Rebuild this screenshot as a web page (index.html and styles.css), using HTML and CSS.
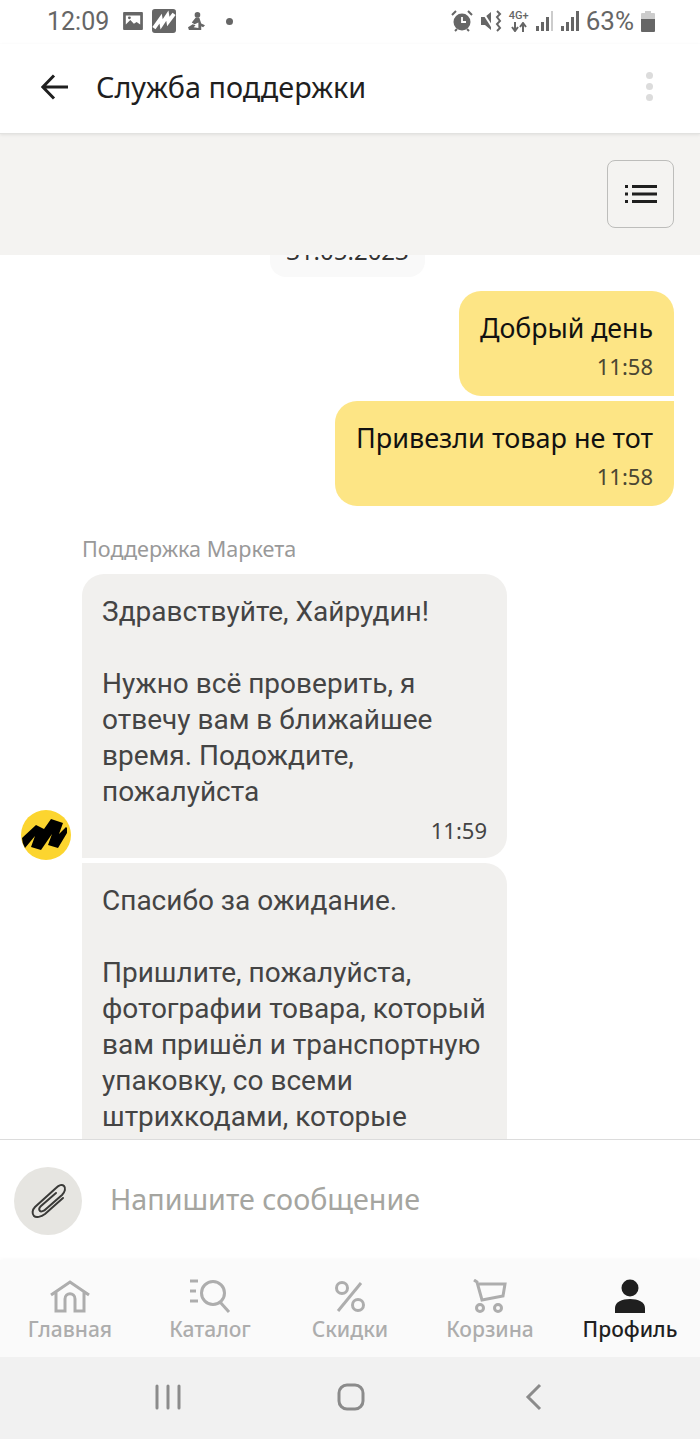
FILE: index.html
```html
<!DOCTYPE html>
<html lang="ru">
<head>
    <meta charset="UTF-8">
    <meta name="viewport" content="width=device-width, initial-scale=1.0">
    <title>Служба поддержки</title>
    <link rel="stylesheet" href="styles.css">
</head>
<body>

<div class="page">
    <!-- статус-бар -->
    <div class="status-bar">
        <div class="status-left">
            <span class="status-time">12:09</span>
            <svg class="st-icon" width="20" height="18" viewBox="0 0 22 20"><path fill="#666" fill-rule="evenodd" d="M1 0h20a1 1 0 0 1 1 1v18a1 1 0 0 1-1 1H1a1 1 0 0 1-1-1V1a1 1 0 0 1 1-1zM3 4v10l5-5 4 4 3-2 4 3V4z"/><circle cx="7" cy="6.5" r="1.6" fill="#666"/></svg>
            <svg class="st-icon st-market" width="24" height="24" viewBox="0 0 25 25"><rect width="25" height="25" rx="3" fill="#666"/><path fill="none" stroke="#fff" stroke-width="4" d="M2 20 9 10l1 6 6-9 1 6 6-8"/></svg>
            <svg class="st-icon st-figure" width="17" height="19" viewBox="0 0 18 20"><circle cx="10" cy="3" r="3" fill="#666"/><path fill="#666" d="M8 6h4l2 6 4 2-2 2-2-1v4H1l-1-3 5-3 3 1-2 2 5 1V11L7 13 4 11z"/></svg>
            <span class="status-dot"></span>
        </div>
        <div class="status-right">
            <svg width="22" height="22" viewBox="0 0 22 22"><circle cx="11" cy="12" r="8.5" fill="#666"/><path d="M11 7v5h4" fill="none" stroke="#fff" stroke-width="1.8"/><path d="M1 5l4-4M21 5l-4-4" stroke="#666" stroke-width="2"/><path d="M4 21l2-2M18 21l-2-2" stroke="#666" stroke-width="2"/></svg>
            <svg class="st-mute" width="21" height="22" viewBox="0 0 21 22"><path fill="#666" d="M0 7h4l6-5v18l-6-5H0z"/><path d="M1 1l12 19" stroke="#fff" stroke-width="2"/><path d="M16 1l3 3-3 3 3 4-3 3 3 4-3 3" fill="none" stroke="#666" stroke-width="2"/></svg>
            <div class="st-network">
                <span>4G+</span>
                <svg width="16" height="10" viewBox="0 0 16 10"><path d="M4 0v8M1 5l3 4 3-4M12 10V2M9 5l3-4 3 4" fill="none" stroke="#666" stroke-width="2"/></svg>
            </div>
            <svg width="18" height="20" viewBox="0 0 18 20"><rect x="0" y="15" width="3" height="5" fill="#666"/><rect x="5" y="11" width="3" height="9" fill="#666"/><rect x="10" y="6" width="3" height="14" fill="#666"/><rect x="15" y="0" width="2" height="20" fill="#ccc"/></svg>
            <svg width="18" height="20" viewBox="0 0 18 20"><rect x="0" y="15" width="3" height="5" fill="#666"/><rect x="5" y="11" width="3" height="9" fill="#666"/><rect x="10" y="6" width="3" height="14" fill="#666"/><rect x="15" y="0" width="3" height="20" fill="#666"/></svg>
            <span class="status-battery">63%</span>
            <svg width="14" height="21" viewBox="0 0 14 21"><path fill="#ccc" d="M4 0h6v2h3a1 1 0 0 1 1 1v5H0V3a1 1 0 0 1 1-1h3z"/><path fill="#666" d="M0 8h14v12a1 1 0 0 1-1 1H1a1 1 0 0 1-1-1z"/></svg>
        </div>
    </div>

    <!-- шапка -->
    <div class="header">
        <svg class="back-icon" width="28" height="26" viewBox="0 0 28 26"><path d="M27 13H2M13 1.500 1.800 13 13 24.500" fill="none" stroke="#1f1f1f" stroke-width="3"/></svg>
        <h1>Служба поддержки</h1>
        <div class="dots"><span></span><span></span><span></span></div>
    </div>

    <div class="toolbar">
        <button class="list-button">
            <svg width="32" height="22" viewBox="0 0 32 22"><path d="M0 2h3v3H0zM0 9.500h3v3H0zM0 17h3v3H0zM7 2h25v3H7zM7 9.500h25v3H7zM7 17h25v3H7z" fill="#1f1f1f"/></svg>
        </button>
    </div>

    <!-- чат -->
    <div class="chat">
        <div class="date-chip">31.05.2023</div>

        <div class="msg-out first">
            <div class="msg-text">Добрый день</div>
            <div class="msg-time">11:58</div>
        </div>
        <div class="msg-out second">
            <div class="msg-text">Привезли товар не тот</div>
            <div class="msg-time">11:58</div>
        </div>

        <div class="sender">Поддержка Маркета</div>
        <div class="msg-row">
            <svg class="avatar" width="50" height="50" viewBox="0 0 50 50">
                <circle cx="25" cy="25" r="25" fill="#fcd52f"/>
                <path fill="#000" d="M1 28 15 15l8 4 7-10 12 4-4 11 7-7 1 1v5L37 38l-10-3 4-11-11 16-10-3 4-11-10 12q-3-5-3-10z"/>
            </svg>
            <div class="msg-in first">
                <div class="msg-text">Здравствуйте, Хайрудин!<br><br>Нужно всё проверить, я<br>отвечу вам в ближайшее<br>время. Подождите,<br>пожалуйста</div>
                <div class="msg-time">11:59</div>
            </div>
        </div>
        <div class="msg-in second">
            <div class="msg-text">Спасибо за ожидание.<br><br>Пришлите, пожалуйста,<br>фотографии товара, который<br>вам пришёл и транспортную<br>упаковку, со всеми<br>штрихкодами, которые</div>
        </div>
    </div>

    <!-- поле ввода -->
    <div class="composer">
        <div class="attach">
            <svg width="38" height="38" viewBox="0 0 38 38"><path d="M34 16 16 32c-4 3-9 4-11 2s-2-6 1-9L27 6c3-3 6-4 8-2s1 6-2 9L17 27c-2 2-5 3-6 2s-1-3 1-5L27 11" fill="none" stroke="#3a3a38" stroke-width="2" stroke-linecap="round"/></svg>
        </div>
        <div class="placeholder">Напишите сообщение</div>
    </div>

    <!-- нижнее меню -->
    <div class="tabs">
        <div class="tab">
            <svg width="40" height="34" viewBox="0 0 40 34"><path d="M1 16 20 3l19 13M6 13v19h9V20c0-7 10-7 10 0v12h9V13" fill="none" stroke="#adadad" stroke-width="3"/></svg>
            <span>Главная</span>
        </div>
        <div class="tab">
            <svg width="42" height="34" viewBox="0 0 42 34"><path d="M1 2h8M1 12h6M1 22h8" stroke="#adadad" stroke-width="3"/><circle cx="24" cy="14" r="11.500" fill="none" stroke="#adadad" stroke-width="3"/><path d="m31 23 9 10" stroke="#adadad" stroke-width="3"/></svg>
            <span>Каталог</span>
        </div>
        <div class="tab">
            <svg width="34" height="34" viewBox="0 0 34 34"><circle cx="9" cy="9" r="5.500" fill="none" stroke="#adadad" stroke-width="3"/><circle cx="25" cy="26" r="5.500" fill="none" stroke="#adadad" stroke-width="3"/><path d="M28 4 5 32" stroke="#adadad" stroke-width="3"/></svg>
            <span>Скидки</span>
        </div>
        <div class="tab">
            <svg width="34" height="34" viewBox="0 0 34 34"><path d="m1 1 3 2 5 18 21-4 2-12H6" fill="none" stroke="#adadad" stroke-width="3"/><circle cx="7" cy="29" r="3.500" fill="none" stroke="#adadad" stroke-width="3"/><circle cx="25" cy="29" r="3.500" fill="none" stroke="#adadad" stroke-width="3"/></svg>
            <span>Корзина</span>
        </div>
        <div class="tab active">
            <svg width="32" height="34" viewBox="0 0 32 34"><circle cx="16" cy="9" r="8.500" fill="#1f1f1f"/><path d="M1 34v-5c0-6 7-9 15-9s15 3 15 9v5z" fill="#1f1f1f"/></svg>
            <span>Профиль</span>
        </div>
    </div>

    <!-- кнопки android -->
    <div class="nav-bar">
        <svg width="26" height="26" viewBox="0 0 26 26"><path d="M2 2v22M13 2v22M24 2v22" stroke="#8b8b8b" stroke-width="3" stroke-linecap="round"/></svg>
        <svg class="nav-home" width="28" height="28" viewBox="0 0 28 28"><rect x="2" y="2" width="24" height="24" rx="8" fill="none" stroke="#8b8b8b" stroke-width="3"/></svg>
        <svg width="18" height="28" viewBox="0 0 18 28"><path d="M15 2 3 14l12 12" fill="none" stroke="#8b8b8b" stroke-width="3"/></svg>
    </div>
</div>

</body>
</html>
```

FILE: styles.css
```css
* {
    box-sizing: border-box;
}
body {
    margin: 0;
    font-family: "Noto Sans", Arial, sans-serif;
    background: white;
}
.page {
    width: 700px;
    height: 1439px;
    display: flex;
    flex-direction: column;
    overflow: hidden;
}

.status-bar {
    height: 44px;
    flex: none;
    display: flex;
    justify-content: space-between;
    align-items: center;
    padding: 0 45px 2px 47px;
    color: #666;
}
.status-left, .status-right {
    display: flex;
    align-items: center;
}
.status-time {
    font-family: Roboto, sans-serif;
    font-size: 25px;
    margin-right: 14px;
}
.st-market {
    margin-left: 9px;
}
.st-figure {
    margin-left: 12px;
}
.status-dot {
    width: 7px;
    height: 7px;
    margin-left: 21px;
    border-radius: 50%;
    background: #666;
}
.status-right {
    gap: 7px;
}
.st-mute {
    margin-left: 1px;
}
.st-network {
    display: flex;
    flex-direction: column;
    align-items: center;
    font-family: Roboto, sans-serif;
    font-size: 11px;
    font-weight: 500;
    line-height: 12px;
}
.status-battery {
    font-family: Roboto, sans-serif;
    font-size: 26px;
}

.header {
    height: 90px;
    flex: none;
    display: flex;
    align-items: center;
    padding: 0 47px 4px 41px;
    background: white;
    border-bottom: 1px solid #e2e2e0;
    box-shadow: 0 1px 3px rgba(0, 0, 0, 0.08);
    position: relative;
}
.header h1 {
    flex: 1;
    margin: 0 0 0 27px;
    font-size: 28.8px;
    font-weight: 400;
    color: #1f1f1f;
}
.dots {
    display: flex;
    flex-direction: column;
    gap: 4px;
}
.dots span {
    width: 7px;
    height: 7px;
    border-radius: 50%;
    background: #dcdcdc;
}

.toolbar {
    height: 121px;
    flex: none;
    display: flex;
    justify-content: flex-end;
    padding: 26px 26px 0 0;
    background: #f4f3f1;
}
.list-button {
    width: 67px;
    height: 68px;
    display: flex;
    align-items: center;
    justify-content: center;
    padding: 0;
    background: transparent;
    border: 1px solid #bdbdbb;
    border-radius: 8px;
}

.chat {
    flex: 1;
    min-height: 0;
    overflow: hidden;
    display: flex;
    flex-direction: column;
}
.date-chip {
    width: 155px;
    height: 44px;
    flex: none;
    margin: -22px 0 14px 270px;
    background: #f9f9f9;
    border-radius: 0 0 16px 16px;
    font-size: 24px;
    line-height: 36px;
    text-align: center;
    color: #333;
}
.msg-text {
    font-family: Roboto, sans-serif;
    font-size: 28px;
    line-height: 36px;
    white-space: nowrap;
}
.msg-time {
    margin-top: 2px;
    font-size: 22px;
    line-height: 36px;
    text-align: right;
}
.msg-out {
    flex: none;
    align-self: flex-end;
    height: 105px;
    margin-right: 26px;
    padding: 19px 21px 0;
    background: #fde585;
    color: #111;
}
.msg-out .msg-text {
    font-family: "Noto Sans", Arial, sans-serif;
    font-size: 27px;
}
.msg-out .msg-time {
    color: #4a4632;
}
.msg-out.first {
    border-radius: 22px 22px 0 22px;
}
.msg-out.first .msg-text {
    font-size: 26.7px;
}
.msg-out.second {
    margin-top: 5px;
    border-radius: 22px 0 22px 22px;
}
.sender {
    flex: none;
    margin: 29px 0 0 82px;
    font-size: 21.6px;
    line-height: 28px;
    color: #999;
}
.msg-row {
    flex: none;
    display: flex;
    align-items: flex-end;
    gap: 11px;
    margin-top: 11px;
    padding-left: 21px;
}
.avatar {
    flex: none;
    margin-bottom: -2px;
}
.msg-in {
    flex: none;
    width: 425px;
    padding: 20px 20px 10px;
    background: #f1f0ee;
    color: #444;
}
.msg-in.first {
    border-radius: 22px 22px 22px 0;
}
.msg-in.second {
    margin: 5px 0 0 82px;
    padding-bottom: 50px;
    border-radius: 0 22px 22px 22px;
}

.composer {
    height: 121px;
    flex: none;
    display: flex;
    align-items: center;
    gap: 28px;
    padding: 1px 14px 0;
    background: white;
    border-top: 1px solid #dcdcdc;
}
.attach {
    width: 68px;
    height: 68px;
    display: flex;
    align-items: center;
    justify-content: center;
    border-radius: 50%;
    background: #e6e5e1;
}
.placeholder {
    margin-bottom: 4px;
    font-size: 28.7px;
    color: #a5a5a0;
}

.tabs {
    height: 97px;
    flex: none;
    display: flex;
    background: #fafafa;
    box-shadow: 0 -2px 3px rgba(0, 0, 0, 0.02);
}
.tab {
    width: 140px;
    display: flex;
    flex-direction: column;
    align-items: center;
    padding-top: 19px;
    font-size: 21px;
    font-weight: 500;
    line-height: 28px;
    color: #adadad;
}
.tab.active {
    color: #1f1f1f;
}
.tab svg {
    height: 34px;
    margin-bottom: 2px;
}

.nav-bar {
    height: 82px;
    flex: none;
    display: flex;
    justify-content: space-between;
    align-items: center;
    padding: 0 157px 2px 155px;
    background: #f1f1f1;
}
.nav-home {
    margin-right: 4px;
}
```
